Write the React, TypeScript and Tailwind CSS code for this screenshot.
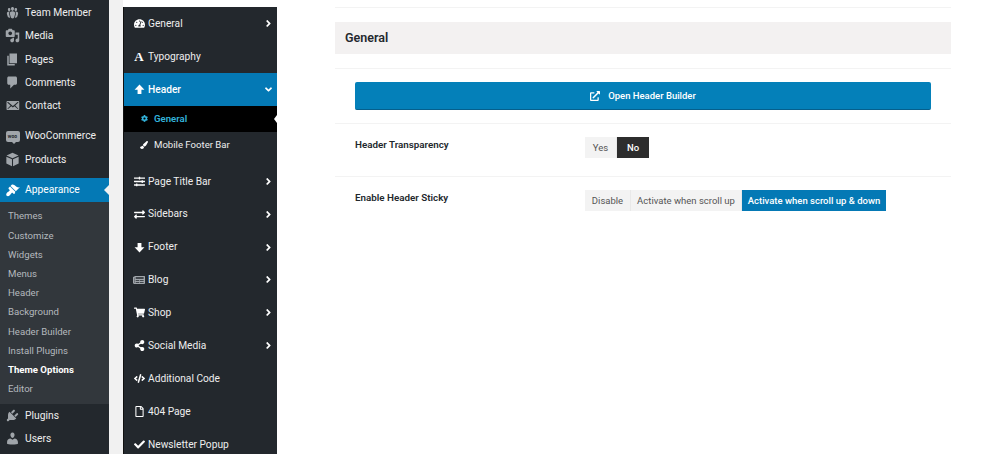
import React from "react";
import {
  FaAngleDown,
  FaAngleRight,
  FaCheck,
  FaCode,
  FaCog,
  FaExchangeAlt,
  FaExternalLinkAlt,
  FaNewspaper,
  FaPaintBrush,
  FaRegFile,
  FaShareAlt,
  FaShoppingCart,
  FaSlidersH,
  FaTachometerAlt,
} from "react-icons/fa";

// wp-admin menu glyphs, traced from the dashicons set
const Dash = ({ d }: { d: string }) => (
  <svg viewBox="0 0 20 20" width="15" height="15" fill="currentColor" aria-hidden="true">
    <path d={d} />
  </svg>
);

const GROUPS =
  "M8.03 4.46c-.29 1.28.55 3.46 1.97 3.46 1.41 0 2.25-2.18 1.96-3.46-.22-.98-1.08-1.63-1.96-1.63-.89 0-1.74.65-1.97 1.63zm-4.13.9c-.25 1.08.47 2.93 1.67 2.93s1.92-1.85 1.67-2.93c-.19-.83-.92-1.39-1.67-1.39s-1.48.56-1.67 1.39zm8.86 0c-.25 1.08.47 2.93 1.66 2.93 1.2 0 1.92-1.85 1.67-2.93-.19-.83-.92-1.39-1.67-1.39-.74 0-1.47.56-1.66 1.39zm-.59 11.43l1.25-4.3C14.2 10 12.71 8.47 10 8.47c-2.72 0-4.21 1.53-3.44 4.02l1.26 4.3C8.05 17.51 9 18 10 18c.98 0 1.94-.49 2.17-1.21zm-6.1-7.63c-.49.67-.96 1.83-.42 3.59l1.12 3.79c-.34.2-.77.31-1.2.31-.85 0-1.65-.41-1.85-1.03l-1.07-3.65c-.65-2.11.61-3.4 2.92-3.4.27 0 .54.02.79.06-.1.1-.2.22-.29.33zm8.35-.39c2.31 0 3.58 1.29 2.92 3.4l-1.07 3.65c-.2.62-1 1.03-1.85 1.03-.43 0-.86-.11-1.2-.31l1.11-3.77c.55-1.78.08-2.94-.42-3.61-.08-.11-.18-.23-.28-.33.25-.04.51-.06.79-.06z";
const MEDIA =
  "M13 11V4c0-.55-.45-1-1-1h-1.67L9 1H5L3.67 3H2c-.55 0-1 .45-1 1v7c0 .55.45 1 1 1h10c.55 0 1-.45 1-1zM7 4.5c1.38 0 2.5 1.12 2.5 2.5S8.38 9.5 7 9.5 4.5 8.38 4.5 7 5.62 4.5 7 4.5zM14 6h5v10.5c0 1.38-1.12 2.5-2.5 2.5S14 17.88 14 16.5s1.12-2.5 2.5-2.5c.17 0 .34.02.5.05V9h-3V6zm-4 8.05V13h2v3.5c0 1.38-1.12 2.5-2.5 2.5S7 17.88 7 16.5 8.12 14 9.5 14c.17 0 .34.02.5.05z";
const PAGES = "M6 15V2h10v13H6zm-1 1h8v2H3V5h2v11z";
const COMMENT = "M5 2h9c1.1 0 2 .9 2 2v7c0 1.1-.9 2-2 2h-2l-5 5v-5H5c-1.1 0-2-.9-2-2V4c0-1.1.9-2 2-2z";
const EMAIL =
  "M19 14.5v-9c0-.83-.67-1.5-1.5-1.5H3.49c-.83 0-1.5.67-1.5 1.5v9c0 .83.67 1.5 1.5 1.5H17.5c.83 0 1.5-.67 1.5-1.5zm-1.31-9.11c.33.33.15.67-.03.84L13.6 9.95l3.9 4.06c.12.14.2.36.06.51-.13.16-.43.15-.56.05l-4.37-3.73-2.14 1.95-2.13-1.95-4.37 3.73c-.13.1-.43.11-.56-.05-.14-.15-.06-.37.06-.51l3.9-4.06-4.06-3.72c-.18-.17-.36-.51-.03-.84s.67-.17.95.07l6.24 5.04 6.25-5.04c.28-.24.62-.4.95-.07z";
const PRODUCTS = "M10 1l8 3.6L10 8.4 2 4.6zM1.8 6.2l7.5 3.6V19l-7.5-3.8zM18.2 6.2v9L10.7 19V9.8z";
const BRUSH =
  "M14.48 11.06L7.41 3.99l1.5-1.5c.5-.56 2.3-.47 3.51.32 1.21.8 1.43 1.28 2.91 2.1 1.18.64 2.45 1.26 4.45.85zM13.77 11.77L6.7 4.7 4.93 6.47c-.39.39-.39 1.02 0 1.41l1.06 1.06c.39.39.39 1.03 0 1.42-.6.6-1.43 1.11-2.21 1.69-.35.26-.7.53-1.01.84-1.43 1.43-1.43 3.17-.5 4.1.93.93 2.67.93 4.1-.5.31-.31.58-.66.84-1.01.58-.78 1.09-1.61 1.69-2.21.39-.39 1.03-.39 1.42 0l1.06 1.06c.39.39 1.02.39 1.41 0z";
const PLUGINS =
  "M13.11 4.36L9.87 7.6 8 5.73l3.24-3.24c.35-.34 1.05-.2 1.56.32.52.51.66 1.21.31 1.55zm-8 1.77l.91-1.12 9.01 9.01-1.19.84c-.71.71-2.63 1.16-3.82 1.16H6.14L4.9 17.26c-.59.59-1.54.59-2.12 0-.59-.58-.59-1.53 0-2.12l1.24-1.24v-3.88c0-1.13.4-3.19 1.09-3.89zm7.26 3.97l3.24-3.24c.34-.35 1.04-.21 1.55.31.52.51.66 1.21.31 1.55l-3.24 3.25z";
const USERS =
  "M10 9.25c-2.27 0-2.73-3.44-2.73-3.44C7 4.02 7.82 2 9.97 2c2.16 0 2.98 2.02 2.71 3.81 0 0-.41 3.44-2.68 3.44zm0 2.57L12.72 10c2.39 0 4.52 2.33 4.52 4.53v2.49s-3.65 1.13-7.24 1.13c-3.65 0-7.24-1.13-7.24-1.13v-2.49c0-2.25 1.94-4.48 4.47-4.48z";

const BlockArrow = ({ down }: { down?: boolean }) => (
  <svg viewBox="0 0 20 20" width="11" height="11" fill="currentColor" aria-hidden="true">
    <path d={down ? "M10 19L1 9.5h5.5V2h7v7.5H19z" : "M10 1l9 9.5h-5.5V18h-7v-7.5H1z"} />
  </svg>
);

const WpItem = ({ icon, label, active }: { icon: React.ReactNode; label: string; active?: boolean }) => (
  <div className={`relative flex items-center text-[10.3px] ${active ? "h-[24px] bg-[#0479b5] text-white" : "h-[23.3px] text-[#eeeeee]"}`}>
    <span className={`flex w-[25px] shrink-0 items-center justify-center ${active ? "text-white" : "text-[#a0a5aa]"}`}>{icon}</span>
    <span>{label}</span>
    {active && <span className="absolute right-0 top-[7px] h-0 w-0 border-y-[5px] border-r-[5px] border-y-transparent border-r-[#f1f1f1]" />}
  </div>
);

const WooIcon = () => (
  <span className="relative flex h-[11px] w-[14px] items-center justify-center rounded-[2px] bg-[#a0a5aa] text-[5px] font-bold leading-none text-[#23282d]">
    woo
    <span className="absolute -bottom-[2px] left-[6px] h-0 w-0 border-x-[2px] border-t-[2px] border-x-transparent border-t-[#a0a5aa]" />
  </span>
);

const subItems = ["Themes", "Customize", "Widgets", "Menus", "Header", "Background", "Header Builder", "Install Plugins", "Theme Options", "Editor"];

const WpSidebar = () => (
  <aside className="w-[109px] shrink-0 bg-[#23282d] pt-[1px]">
    <WpItem icon={<Dash d={GROUPS} />} label="Team Member" />
    <WpItem icon={<Dash d={MEDIA} />} label="Media" />
    <WpItem icon={<Dash d={PAGES} />} label="Pages" />
    <WpItem icon={<Dash d={COMMENT} />} label="Comments" />
    <WpItem icon={<Dash d={EMAIL} />} label="Contact" />
    <div className="h-[7px]" />
    <WpItem icon={<WooIcon />} label="WooCommerce" />
    <WpItem icon={<Dash d={PRODUCTS} />} label="Products" />
    <div className="h-[7px]" />
    <WpItem icon={<Dash d={BRUSH} />} label="Appearance" active />
    <div className="bg-[#32373c] py-[5px]">
      {subItems.map((s) => (
        <div key={s} className={`flex h-[19.2px] items-center pl-[8px] text-[9.6px] ${s === "Theme Options" ? "font-bold text-white" : "text-[#b4b9be]"}`}>
          {s}
        </div>
      ))}
    </div>
    <WpItem icon={<Dash d={PLUGINS} />} label="Plugins" />
    <WpItem icon={<Dash d={USERS} />} label="Users" />
  </aside>
);

const PanelItem = ({ icon, label, arrow = true }: { icon: React.ReactNode; label: string; arrow?: boolean }) => (
  <div className="flex h-[32.9px] items-center pl-[7px] pr-[3px] text-[10.2px] text-[#eeeeee]">
    <span className="flex w-[16px] shrink-0 items-center justify-center text-[11px] text-white">{icon}</span>
    <span className="ml-[1px] flex-1">{label}</span>
    {arrow && <FaAngleRight className="text-[11px] text-white" />}
  </div>
);

const OptionsPanel = () => (
  <nav className="mt-[7px] w-[154px] shrink-0 border-l border-[#111111] bg-[#23282d]">
    <PanelItem icon={<FaTachometerAlt />} label="General" />
    <PanelItem
      icon={<span className="font-['Liberation_Serif',serif] text-[13px] font-bold leading-none">A</span>}
      label="Typography"
      arrow={false}
    />
    <div className="flex h-[33px] items-center bg-[#0479b5] pl-[7px] pr-[3px] text-[10.2px] font-medium text-white">
      <span className="flex w-[16px] shrink-0 items-center justify-center">
        <BlockArrow />
      </span>
      <span className="ml-[1px] flex-1">Header</span>
      <FaAngleDown className="text-[11px]" />
    </div>
    <div className="relative flex h-[26px] items-center bg-black pl-[13px] text-[9.6px] font-semibold text-[#33b3db]">
      <span className="mr-[3px] flex w-[14px] justify-center">
        <FaCog className="text-[7px]" />
      </span>
      General
      <span className="absolute right-0 top-[9px] h-0 w-0 border-y-[4px] border-r-[3px] border-y-transparent border-r-white" />
    </div>
    <div className="mb-[6px] flex h-[27px] items-center pl-[13px] text-[9.6px] text-[#eeeeee]">
      <span className="mr-[3px] flex w-[14px] justify-center">
        <FaPaintBrush className="text-[8px] text-white" />
      </span>
      Mobile Footer Bar
    </div>
    <PanelItem icon={<FaSlidersH />} label="Page Title Bar" />
    <PanelItem icon={<FaExchangeAlt />} label="Sidebars" />
    <PanelItem icon={<BlockArrow down />} label="Footer" />
    <PanelItem icon={<FaNewspaper className="text-[12px] text-[#a0a5aa]" />} label="Blog" />
    <PanelItem icon={<FaShoppingCart />} label="Shop" />
    <PanelItem icon={<FaShareAlt />} label="Social Media" />
    <PanelItem icon={<FaCode />} label="Additional Code" arrow={false} />
    <PanelItem icon={<FaRegFile />} label="404 Page" arrow={false} />
    <PanelItem icon={<FaCheck />} label="Newsletter Popup" arrow={false} />
  </nav>
);

const Seg = ({ label, on, width }: { label: string; on?: "dark" | "blue"; width: string }) => (
  <span
    className={`flex h-full items-center justify-center pt-[1px] text-[9.5px] ${width} ${
      on === "dark"
        ? "bg-[#2d2d2d] font-medium text-white"
        : on === "blue"
          ? "bg-[#0479b5] font-medium text-white"
          : "border-r border-[#e9e9e9] bg-[#f3f3f3] text-[#555555]"
    }`}
  >
    {label}
  </span>
);

const Main = () => (
  <main className="ml-[58px] mt-[7px] w-[616px] shrink-0">
    <div className="border-t border-[#f3f3f3] pt-[14px]">
      <div className="flex h-[32px] items-center bg-[#f3f1f1] pl-[10px] text-[12.5px] font-semibold text-[#23282d]">General</div>
      <div className="mt-[14px] border-t border-[#f3f3f3] py-[13px]">
        <div className="mx-[20px] flex h-[28px] items-center justify-center gap-[8px] rounded-[2px] border-b border-[#055f8c] bg-[#0480b9] pt-[1px] text-[9.5px] font-medium text-white">
          <FaExternalLinkAlt className="text-[10px]" />
          Open Header Builder
        </div>
      </div>
      <div className="flex h-[53px] border-t border-[#f3f3f3] px-[20px] pt-[13px]">
        <span className="w-[230px] shrink-0 pt-[2px] text-[9.8px] font-semibold leading-[12px] text-[#23282d]">Header Transparency</span>
        <div className="flex h-[21px]">
          <Seg label="Yes" width="w-[32px]" />
          <Seg label="No" on="dark" width="w-[32px]" />
        </div>
      </div>
      <div className="flex border-t border-[#f3f3f3] px-[20px] pt-[13px]">
        <span className="w-[230px] shrink-0 pt-[2px] text-[9.8px] font-semibold leading-[12px] text-[#23282d]">Enable Header Sticky</span>
        <div className="flex h-[21px]">
          <Seg label="Disable" width="w-[46px]" />
          <Seg label="Activate when scroll up" width="w-[111px]" />
          <Seg label="Activate when scroll up & down" on="blue" width="w-[144px]" />
        </div>
      </div>
    </div>
  </main>
);

export default function App() {
  return (
    <div className="flex h-[454px] w-[1000px] overflow-hidden bg-white font-['Roboto',sans-serif]">
      <WpSidebar />
      <div className="w-[14px] shrink-0 bg-[#f1f1f1]" />
      <OptionsPanel />
      <Main />
    </div>
  );
}
